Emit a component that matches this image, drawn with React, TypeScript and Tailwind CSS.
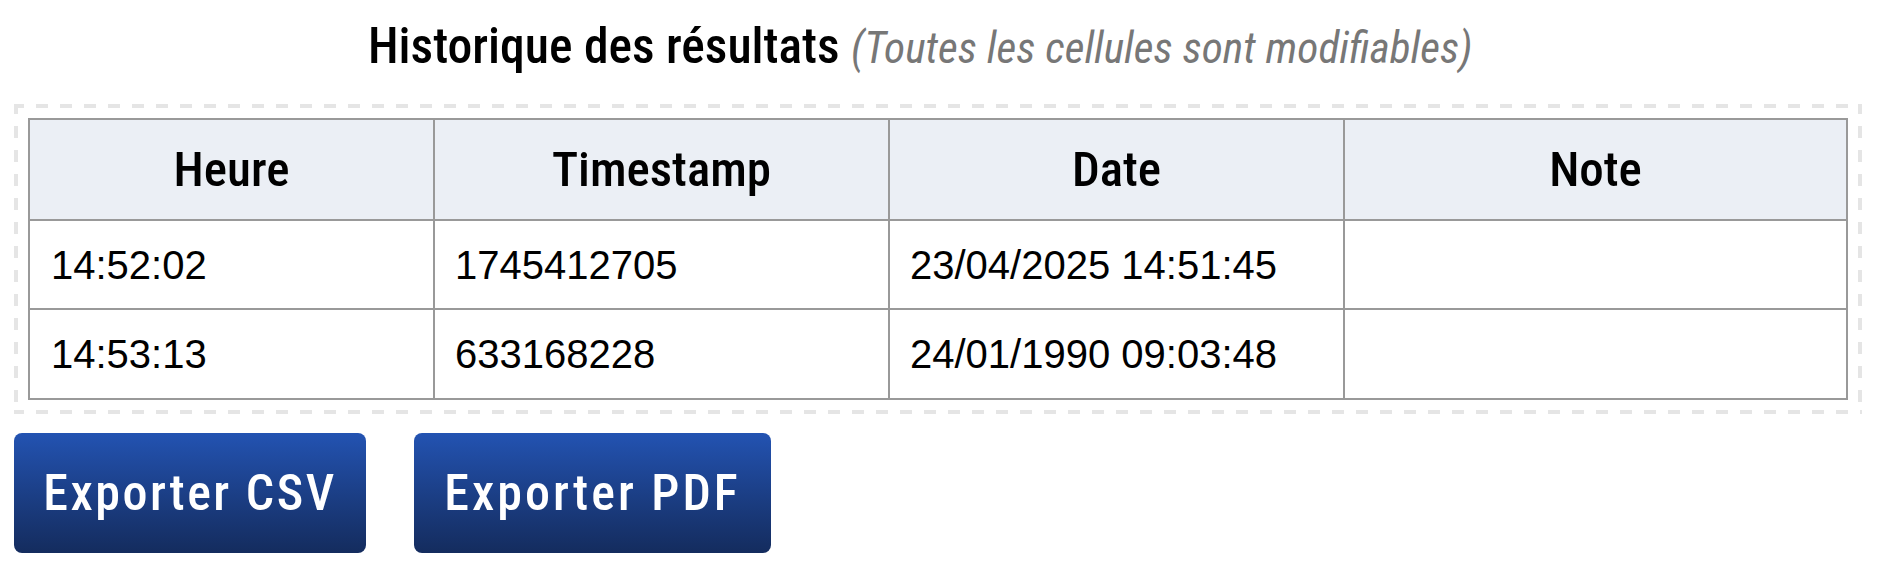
const rows = [
  { heure: '14:52:02', timestamp: '1745412705', date: '23/04/2025 14:51:45', note: '', height: 'h-[89px]' },
  { heure: '14:53:13', timestamp: '633168228', date: '24/01/1990 09:03:48', note: '', height: 'h-[90px]' },
]

const headers = ['Heure', 'Timestamp', 'Date', 'Note']

const displayFont = "font-['Roboto_Condensed','Liberation_Sans_Narrow','Liberation_Sans',sans-serif]"
const exportButton = `${displayFont} h-[120px] rounded-[8px] bg-gradient-to-b from-[#2353b2] to-[#142c5e] text-white text-[50px] font-medium`

export default function App() {
  return (
    <div className="w-[1878px] h-[574px] bg-white overflow-hidden">
      <h2 className={`${displayFont} pt-[16px] pl-[368px] h-[104px] text-[49.6px] leading-[60px] font-medium text-black whitespace-nowrap`}>
        Historique des résultats{' '}
        <span className="text-[#777777] italic font-normal text-[43.4px]">(Toutes les cellules sont modifiables)</span>
      </h2>

      {/* dashed frame has long dashes, drawn with gradients */}
      <div className="mx-[14px] w-[1848px] p-[14px] bg-no-repeat bg-[repeating-linear-gradient(90deg,#e5e5e5_0_10px,transparent_10px_22px,#e5e5e5_22px_24px),repeating-linear-gradient(90deg,#e5e5e5_0_10px,transparent_10px_22px,#e5e5e5_22px_24px),repeating-linear-gradient(180deg,#e5e5e5_0_10px,transparent_10px_22px,#e5e5e5_22px_24px),repeating-linear-gradient(180deg,#e5e5e5_0_10px,transparent_10px_22px,#e5e5e5_22px_24px)] [background-size:100%_4px,100%_4px,4px_100%,4px_100%] [background-position:0_0,0_100%,0_0,100%_0]">
        <table className="w-[1820px] table-fixed border-collapse font-['Liberation_Sans',Arial,sans-serif] text-[40px] text-black">
          <colgroup>
            <col className="w-[405px]" />
            <col className="w-[455px]" />
            <col className="w-[455px]" />
            <col className="w-[503px]" />
          </colgroup>
          <thead>
            <tr className="h-[101px] bg-[#ebeff5]">
              {headers.map((h) => (
                <th key={h} className={`${displayFont} border-2 border-[#999999] text-center text-[49px] font-medium`}>
                  {h}
                </th>
              ))}
            </tr>
          </thead>
          <tbody>
            {rows.map((r) => (
              <tr key={r.heure} className={r.height}>
                <td className="border-2 border-[#999999] px-[21px]">{r.heure}</td>
                <td className="border-2 border-[#999999] px-[20px]">{r.timestamp}</td>
                <td className="border-2 border-[#999999] px-[20px]">{r.date}</td>
                <td className="border-2 border-[#999999] px-[20px]">{r.note}</td>
              </tr>
            ))}
          </tbody>
        </table>
      </div>

      <div className="flex gap-[48px] mt-[19px] ml-[14px]">
        <button className={`${exportButton} w-[352px] tracking-[2.5px]`}>Exporter CSV</button>
        <button className={`${exportButton} w-[357px] tracking-[3px]`}>Exporter PDF</button>
      </div>
    </div>
  )
}
